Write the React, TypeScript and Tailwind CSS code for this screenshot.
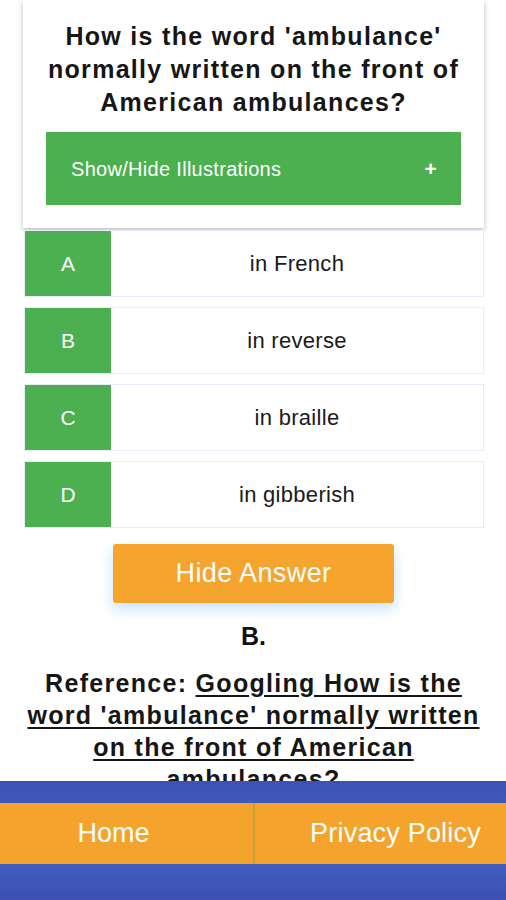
import React from 'react';

const options = [
    { letter: 'A', text: 'in French' },
    { letter: 'B', text: 'in reverse' },
    { letter: 'C', text: 'in braille' },
    { letter: 'D', text: 'in gibberish' },
];

const App: React.FC = () => {
    return (
        <div className="min-h-[900px] bg-white font-['Liberation_Sans',Arial,sans-serif] text-[#111]">
            <div className="pl-[23px] pr-[22px] pb-[140px]">
                {/* question card */}
                <div className="bg-white px-[23px] pt-[20px] pb-[23px] shadow-[0_2px_5px_rgba(0,0,0,0.28)]">
                    <h1 className="text-center text-[25px] font-bold leading-[33px] tracking-[1.3px] text-[#161616]">
                        How is the word 'ambulance' normally written on the front of American ambulances?
                    </h1>
                    <button className="mt-[13px] flex h-[73px] w-full items-center justify-between bg-[#4caf50] pl-[25px] pr-[24px] text-[20px] tracking-[0.3px] text-white">
                        <span>Show/Hide Illustrations</span>
                        <span className="text-[21px] font-bold">+</span>
                    </button>
                </div>

                {/* answers */}
                <div className="mt-[2px] flex flex-col gap-[10px] pl-[1px]">
                    {options.map((o) => (
                        <div key={o.letter} className="flex h-[67px] border border-[#e4edf9] bg-white">
                            <div className="flex w-[86px] items-center justify-center bg-[#4caf50] text-[21px] text-white">
                                {o.letter}
                            </div>
                            <div className="flex flex-1 items-center justify-center text-[22px] tracking-[0.3px] text-[#1a1a1a]">
                                {o.text}
                            </div>
                        </div>
                    ))}
                </div>

                <div className="mt-[16px] flex justify-center">
                    <button className="h-[59px] w-[281px] rounded-[3px] bg-[#f5a42e] text-[27px] tracking-[0.4px] text-white shadow-[0_6px_14px_rgba(110,180,255,0.4)]">
                        Hide Answer
                    </button>
                </div>

                <p className="mt-[17px] text-center text-[25px] font-bold leading-[33px]">B.</p>

                <p className="mt-[14px] text-center text-[25px] font-bold leading-[32px] tracking-[1.3px] text-[#161616]">
                    Reference:{' '}
                    <a href="#" className="underline underline-offset-[3px]">
                        Googling How is the word 'ambulance' normally written on the front of American ambulances?
                    </a>
                </p>
            </div>

            {/* footer nav */}
            <div className="fixed bottom-0 left-0 right-0 h-[119px] bg-gradient-to-b from-[#3f50b4] via-[#4167c8] to-[#3e4fb3] pt-[22px]">
                <div className="grid h-[61px] grid-cols-2">
                    <a href="#" className="flex items-center justify-center bg-[#f4a42d] pr-[26px] text-[27px] text-white">
                        Home
                    </a>
                    <a href="#" className="flex items-center justify-center border-l-2 border-[#c9a13c] bg-[#f4a42d] pl-[30px] text-[27px] tracking-[0.2px] text-white">
                        Privacy Policy
                    </a>
                </div>
            </div>
        </div>
    );
};

export default App;
